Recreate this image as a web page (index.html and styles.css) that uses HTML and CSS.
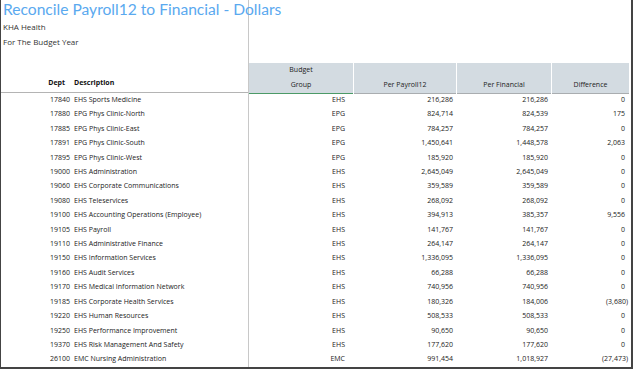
FILE: index.html
```html
<!DOCTYPE html>
<html lang="en">
	<head>
		<meta charset="UTF-8"/>
		<meta name="viewport" content="width=device-width, initial-scale=1.0"/>
		<title>Reconcile Payroll12 to Financial - Dollars</title>
		<link rel="stylesheet" href="styles.css">
	</head>
	<body>
	  <div class="sheet">
		<div class="pane-left">
		  <div class="top">
			<h1 class="title">Reconcile Payroll12 to Financial - Dollars</h1>
			<div class="sub">KHA Health</div>
			<div class="sub">For The Budget Year</div>
		  </div>
		  <div class="head left-row">
			<span class="dept">Dept</span>
			<span>Description</span>
		  </div>
		  <div class="rows">
			<div class="left-row"><span class="dept">17840</span><span>EHS Sports Medicine</span></div>
			<div class="left-row"><span class="dept">17880</span><span>EPG Phys Clinic-North</span></div>
			<div class="left-row"><span class="dept">17885</span><span>EPG Phys Clinic-East</span></div>
			<div class="left-row"><span class="dept">17891</span><span>EPG Phys Clinic-South</span></div>
			<div class="left-row"><span class="dept">17895</span><span>EPG Phys Clinic-West</span></div>
			<div class="left-row"><span class="dept">19000</span><span>EHS Administration</span></div>
			<div class="left-row"><span class="dept">19060</span><span>EHS Corporate Communications</span></div>
			<div class="left-row"><span class="dept">19080</span><span>EHS Teleservices</span></div>
			<div class="left-row"><span class="dept">19100</span><span>EHS Accounting Operations (Employee)</span></div>
			<div class="left-row"><span class="dept">19105</span><span>EHS Payroll</span></div>
			<div class="left-row"><span class="dept">19110</span><span>EHS Administrative Finance</span></div>
			<div class="left-row"><span class="dept">19150</span><span>EHS Information Services</span></div>
			<div class="left-row"><span class="dept">19160</span><span>EHS Audit Services</span></div>
			<div class="left-row"><span class="dept">19170</span><span>EHS Medical Information Network</span></div>
			<div class="left-row"><span class="dept">19185</span><span>EHS Corporate Health Services</span></div>
			<div class="left-row"><span class="dept">19220</span><span>EHS Human Resources</span></div>
			<div class="left-row"><span class="dept">19250</span><span>EHS Performance Improvement</span></div>
			<div class="left-row"><span class="dept">19370</span><span>EHS Risk Management And Safety</span></div>
			<div class="left-row"><span class="dept">26100</span><span>EMC Nursing Administration</span></div>
		  </div>
		</div>

		<div class="pane-right">
		  <div class="top"></div>
		  <div class="head right-row">
			<div class="hcell group">Budget<br>Group</div>
			<div class="hcell">Per Payroll12</div>
			<div class="hcell">Per Financial</div>
			<div class="hcell">Difference</div>
		  </div>
		  <div class="rows">
			<div class="right-row"><span class="grp">EHS</span><span>216,286</span><span>216,286</span><span>0</span></div>
			<div class="right-row"><span class="grp">EPG</span><span>824,714</span><span>824,539</span><span>175</span></div>
			<div class="right-row"><span class="grp">EPG</span><span>784,257</span><span>784,257</span><span>0</span></div>
			<div class="right-row"><span class="grp">EPG</span><span>1,450,641</span><span>1,448,578</span><span>2,063</span></div>
			<div class="right-row"><span class="grp">EPG</span><span>185,920</span><span>185,920</span><span>0</span></div>
			<div class="right-row"><span class="grp">EHS</span><span>2,645,049</span><span>2,645,049</span><span>0</span></div>
			<div class="right-row"><span class="grp">EHS</span><span>359,589</span><span>359,589</span><span>0</span></div>
			<div class="right-row"><span class="grp">EHS</span><span>268,092</span><span>268,092</span><span>0</span></div>
			<div class="right-row"><span class="grp">EHS</span><span>394,913</span><span>385,357</span><span>9,556</span></div>
			<div class="right-row"><span class="grp">EHS</span><span>141,767</span><span>141,767</span><span>0</span></div>
			<div class="right-row"><span class="grp">EHS</span><span>264,147</span><span>264,147</span><span>0</span></div>
			<div class="right-row"><span class="grp">EHS</span><span>1,336,095</span><span>1,336,095</span><span>0</span></div>
			<div class="right-row"><span class="grp">EHS</span><span>66,288</span><span>66,288</span><span>0</span></div>
			<div class="right-row"><span class="grp">EHS</span><span>740,956</span><span>740,956</span><span>0</span></div>
			<div class="right-row"><span class="grp">EHS</span><span>180,326</span><span>184,006</span><span><i class="neg">(3,680)</i></span></div>
			<div class="right-row"><span class="grp">EHS</span><span>508,533</span><span>508,533</span><span>0</span></div>
			<div class="right-row"><span class="grp">EHS</span><span>90,650</span><span>90,650</span><span>0</span></div>
			<div class="right-row"><span class="grp">EHS</span><span>177,620</span><span>177,620</span><span>0</span></div>
			<div class="right-row"><span class="grp">EMC</span><span>991,454</span><span>1,018,927</span><span><i class="neg">(27,473)</i></span></div>
		  </div>
		</div>
	  </div>
	</body>
</html>
```

FILE: styles.css
```css
* {
  box-sizing: border-box;
}
body {
  margin: 0;
  background: #fff;
  font-family: "Open Sans", "Noto Sans", sans-serif;
  color: #222;
}
.sheet {
  display: flex;
  width: 633px;
  height: 369px;
  border-left: 1px solid #444;
  border-right: 2px solid #444;
  border-bottom: 2px solid #444;
  overflow: hidden;
}
.pane-left {
  position: relative;
  z-index: 1;
  width: 248px;
  flex: none;
  border-right: 1px solid #c8c8c8;
}
.pane-right {
  flex: 1;
}
.top {
  height: 63px;
}
.title {
  margin: 0;
  padding-left: 2px;
  font-family: "Lato", "Open Sans", sans-serif;
  font-size: 15.6px;
  font-weight: 400;
  line-height: 19px;
  color: #5aa9ef;
  white-space: nowrap;
}
.sub {
  padding-left: 2px;
  font-size: 8px;
  line-height: 15px;
  color: #333;
}
.head {
  height: 30px;
}
.left-row {
  display: grid;
  grid-template-columns: 69px 1fr;
  column-gap: 4px;
  font-size: 7px;
  line-height: 14.4px;
  white-space: nowrap;
}
.left-row .dept {
  text-align: right;
}
.pane-left .head {
  align-items: end;
  padding-bottom: 2px;
  font-weight: 700;
  color: #111;
  border-bottom: 1px solid #b4b4b4;
}
.pane-left .head .dept {
  padding-right: 5px;
}
.right-row {
  display: grid;
  grid-template-columns: 104px 102px 94px 77px;
  column-gap: 1px;
  font-size: 7px;
  line-height: 14.4px;
  white-space: nowrap;
}
.right-row span {
  text-align: right;
  padding-right: 3px;
}
.right-row span.grp {
  padding-right: 8px;
}
.right-row span:last-child {
  padding-right: 4px;
}
.neg {
  font-style: normal;
  display: inline-block;
  margin-right: -3px;
}
.hcell {
  display: flex;
  flex-direction: column;
  justify-content: flex-end;
  text-align: center;
  background: #d3dbe1;
  border-bottom: 1px solid #a9adb0;
  padding-bottom: 1px;
  font-size: 7px;
  line-height: 14.5px;
  color: #222;
}
.hcell.group {
  border-bottom-color: #4b9a67;
}
```
